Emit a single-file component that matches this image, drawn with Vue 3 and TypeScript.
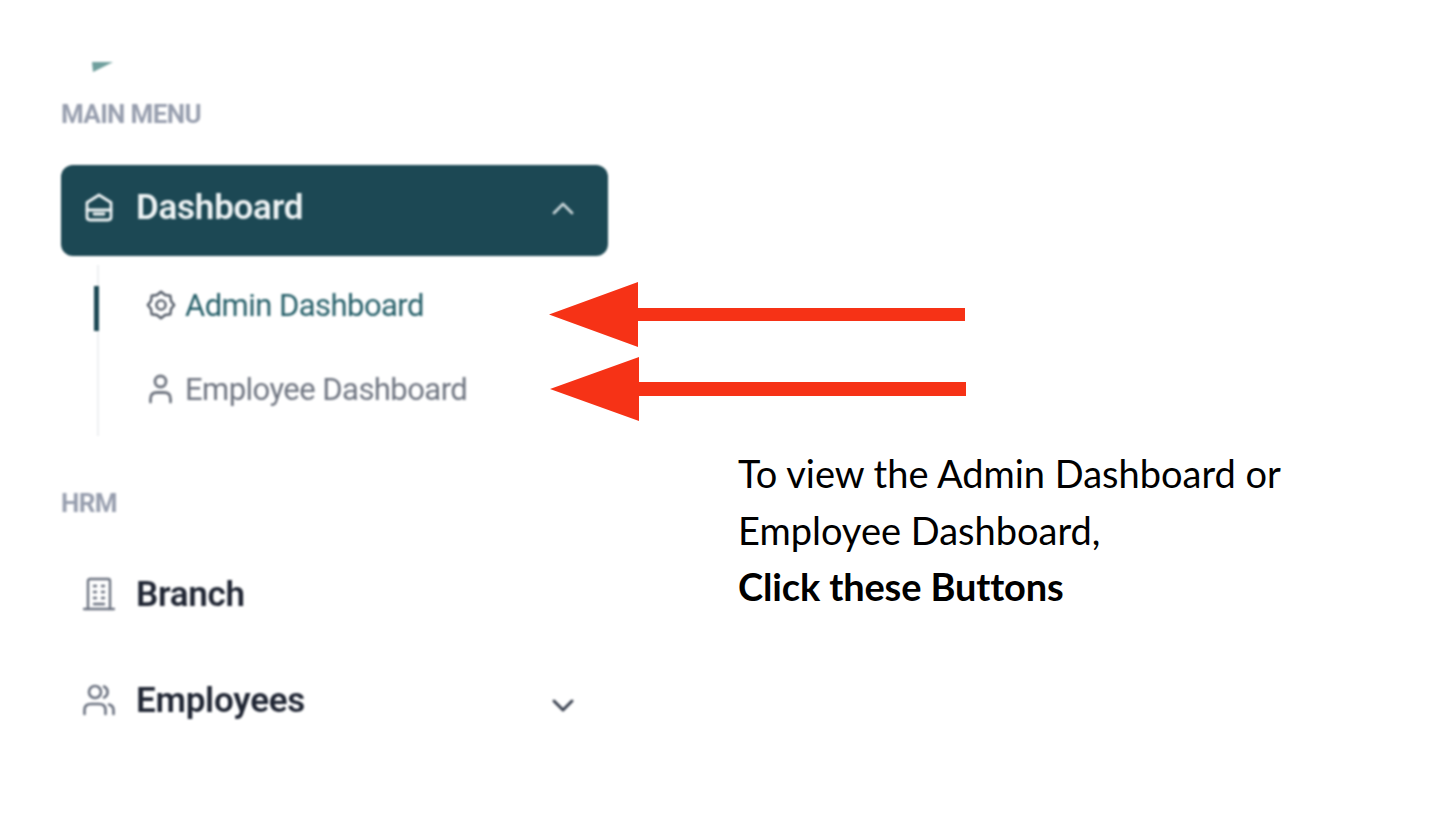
<script setup lang="ts">
interface SubItem {
  label: string
  icon: 'gear' | 'user'
  active: boolean
}

const subItems: SubItem[] = [
  { label: 'Admin Dashboard', icon: 'gear', active: true },
  { label: 'Employee Dashboard', icon: 'user', active: false }
]
</script>

<template>
  <div class="page">
    <aside class="sidebar">
      <svg class="logo-sliver" width="24" height="12" viewBox="0 0 24 12">
        <path d="M1 0H22L2 10Z" fill="#6f9f9d" />
      </svg>

      <div class="section-label main-label">MAIN MENU</div>

      <div class="menu-row active-row">
        <svg class="row-icon" width="32" height="32" viewBox="0 0 32 32" fill="none" stroke="currentColor" stroke-width="2.8" stroke-linejoin="round" stroke-linecap="round">
          <path d="M16 3 L28 10.5 V25 Q28 28 25 28 H7 Q4 28 4 25 V10.5 Z" />
          <path d="M4 18 H28" />
          <path d="M11 22 H21" />
        </svg>
        <span class="row-label">Dashboard</span>
        <svg class="chevron" width="24" height="24" viewBox="0 0 24 24" fill="none" stroke="#c9d6d9" stroke-width="2.8" stroke-linecap="round" stroke-linejoin="round">
          <path d="M3 17 L12 8 L21 17" />
        </svg>
      </div>

      <div class="submenu">
        <div v-for="item in subItems" :key="item.label" class="sub-row" :class="{ active: item.active }">
          <span v-if="item.active" class="active-bar"></span>
          <svg v-if="item.icon === 'gear'" class="sub-icon" width="30" height="30" viewBox="0 0 30 30" fill="none" stroke="#565e6a" stroke-width="2.4" stroke-linejoin="round">
            <path d="M28.2 15 L25 10.9 L24.3 5.7 L19.1 5 L15 1.8 L10.9 5 L5.7 5.7 L5 10.9 L1.8 15 L5 19.1 L5.7 24.3 L10.9 25 L15 28.2 L19.1 25 L24.3 24.3 L25 19.1 Z" />
            <circle cx="15" cy="15" r="4.6" />
          </svg>
          <svg v-else class="sub-icon" width="30" height="30" viewBox="0 0 30 30" fill="none" stroke="#6f7580" stroke-width="2.8" stroke-linecap="round">
            <circle cx="14.5" cy="7.5" r="5.5" />
            <path d="M4.5 28 V25 Q4.5 18.5 11 18.5 H18 Q24.5 18.5 24.5 25 V28" />
          </svg>
          <span class="sub-label">{{ item.label }}</span>
        </div>
      </div>

      <div class="section-label hrm-label">HRM</div>

      <div class="menu-row plain-row branch-row">
        <svg class="row-icon" width="32" height="34" viewBox="0 0 32 34" fill="none" stroke="#6b7280" stroke-width="2.4" stroke-linecap="round">
          <path d="M1 32 H31" />
          <path d="M5 32 V4 Q5 2 7 2 H25 Q27 2 27 4 V32" />
          <path d="M11 9 H13 M19 9 H21 M11 15 H13 M19 15 H21 M11 21 H13 M19 21 H21 M11 27 H21" />
        </svg>
        <span class="row-label">Branch</span>
      </div>

      <div class="menu-row plain-row employees-row">
        <svg class="row-icon" width="32" height="32" viewBox="0 0 32 32" fill="none" stroke="#6b7280" stroke-width="2.6" stroke-linecap="round">
          <circle cx="12" cy="8" r="6" />
          <path d="M21 2.5 A6 6 0 0 1 21 13.5" />
          <path d="M1.5 30 V26 Q1.5 20 8 20 H16 Q22.5 20 22.5 26 V30" />
          <path d="M26 20.5 Q30.5 22 30.5 26 V30" />
        </svg>
        <span class="row-label">Employees</span>
        <svg class="chevron" width="24" height="24" viewBox="0 0 24 24" fill="none" stroke="#3a4250" stroke-width="3" stroke-linecap="round" stroke-linejoin="round">
          <path d="M3 9 L12 18 L21 9" />
        </svg>
      </div>
    </aside>

    <!-- annotation arrows sit on top of the screenshot -->
    <svg class="arrows" width="1444" height="822" viewBox="0 0 1444 822">
      <path d="M549 314.5 L638 282 V308 H965 V321 H638 V347 Z" fill="#f63216" />
      <path d="M550 389 L639 357 V382 H966 V396 H639 V421 Z" fill="#f63216" />
    </svg>

    <div class="note">
      <div>To view the Admin Dashboard or</div>
      <div>Employee Dashboard,</div>
      <div class="note-strong">Click these Buttons</div>
    </div>
  </div>
</template>

<style scoped>
.page {
  position: relative;
  width: 1444px;
  height: 822px;
  overflow: hidden;
  background: #ffffff;
  font-family: Roboto, "Liberation Sans", sans-serif;
}

.sidebar {
  display: flex;
  flex-direction: column;
  width: 547px;
  margin-left: 61px;
  padding-top: 62px;
  filter: blur(0.9px);
}

.logo-sliver {
  display: block;
  margin-left: 30px;
  flex: none;
}

.section-label {
  font-size: 26px;
  line-height: 30px;
  font-weight: 700;
  letter-spacing: -0.65px;
  color: #979eae;
}

.main-label {
  margin-top: 25px;
}

.hrm-label {
  margin-top: 52px;
}

.menu-row {
  display: flex;
  align-items: center;
  padding: 0 33px 0 22px;
  font-size: 35px;
  font-weight: 600;
  letter-spacing: -0.25px;
}

.row-icon {
  flex: none;
  margin-right: 21px;
}

.row-label {
  flex: 1;
}

.chevron {
  flex: none;
}

.active-row {
  height: 91px;
  box-sizing: border-box;
  padding-bottom: 6px;
  margin-top: 36px;
  border-radius: 12px;
  background: #1c4854;
  color: #eef3f4;
}

.plain-row {
  color: #1f2533;
}

.branch-row {
  height: 60px;
  margin-top: 46px;
}

.employees-row {
  height: 60px;
  margin-top: 46px;
}

.employees-row .chevron {
  margin-top: 7px;
}

.submenu {
  display: flex;
  flex-direction: column;
  gap: 14px;
  margin-top: 9px;
  margin-left: 36px;
  padding: 5px 0 12px;
  border-left: 2px solid #eef0f2;
}

.sub-row {
  position: relative;
  display: flex;
  align-items: center;
  height: 70px;
  padding-left: 47px;
  font-size: 31px;
  font-weight: 400;
  letter-spacing: -0.55px;
  color: #6f7581;
}

.sub-row.active {
  color: #255f69;
}

.active-bar {
  position: absolute;
  left: -5px;
  top: 16px;
  width: 5px;
  height: 45px;
  background: #1c4854;
}

.sub-icon {
  flex: none;
  margin-right: 9px;
}

.arrows {
  position: absolute;
  left: 0;
  top: 0;
}

.note {
  position: absolute;
  left: 738px;
  top: 445px;
  font-family: Lato, "Open Sans", sans-serif;
  font-size: 38px;
  line-height: 56.5px;
  color: #000000;
}

.note-strong {
  font-weight: 700;
  letter-spacing: -0.15px;
}
</style>

<style>
html,
body {
  margin: 0;
  background: #ffffff;
  overflow: hidden;
}
</style>
